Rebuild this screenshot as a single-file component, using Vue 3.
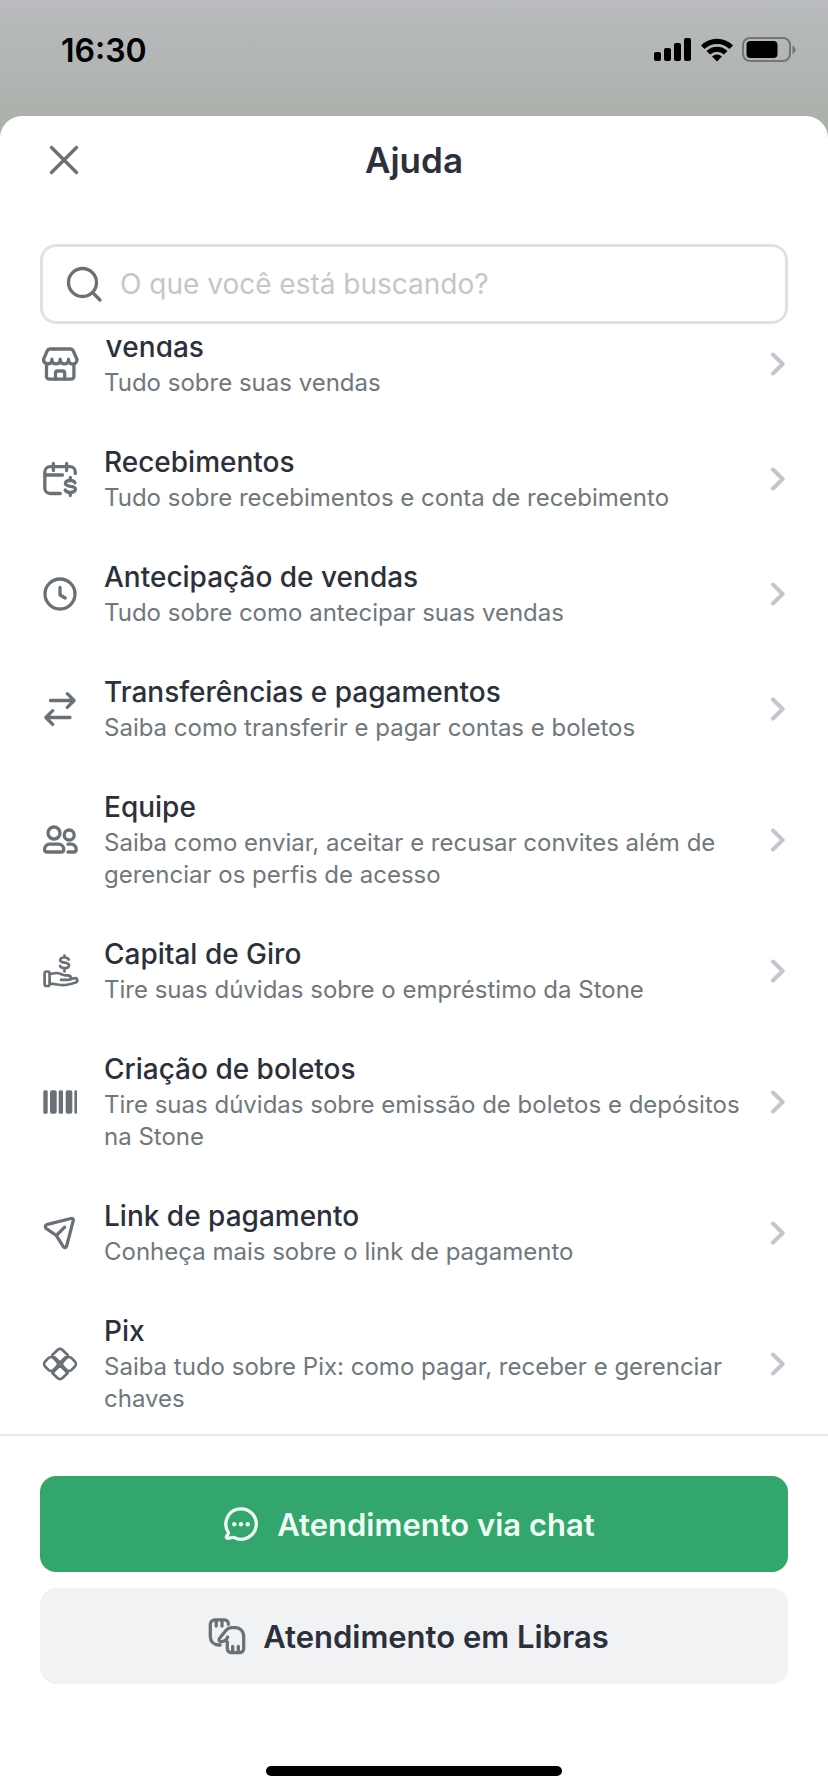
<script setup>
import { onMounted, ref } from 'vue'

const search = ref('')
const scroller = ref(null)

const topics = [
  { icon: 'store', title: 'Vendas', text: 'Tudo sobre suas vendas' },
  { icon: 'calendar', title: 'Recebimentos', text: 'Tudo sobre recebimentos e conta de recebimento' },
  { icon: 'clock', title: 'Antecipação de vendas', text: 'Tudo sobre como antecipar suas vendas' },
  { icon: 'transfer', title: 'Transferências e pagamentos', text: 'Saiba como transferir e pagar contas e boletos' },
  { icon: 'team', title: 'Equipe', text: 'Saiba como enviar, aceitar e recusar convites além de gerenciar os perfis de acesso' },
  { icon: 'loan', title: 'Capital de Giro', text: 'Tire suas dúvidas sobre o empréstimo da Stone' },
  { icon: 'barcode', title: 'Criação de boletos', text: 'Tire suas dúvidas sobre emissão de boletos e depósitos na Stone' },
  { icon: 'send', title: 'Link de pagamento', text: 'Conheça mais sobre o link de pagamento' },
  { icon: 'pix', title: 'Pix', text: 'Saiba tudo sobre Pix: como pagar, receber e gerenciar chaves' },
]

// The list opens slightly scrolled, with the first row under the search field.
onMounted(() => {
  scroller.value.scrollTop = 33
})
</script>

<template>
  <div class="screen">
    <div class="status">
      <span class="time">16:30</span>
      <svg class="indicators" viewBox="0 0 142 28" aria-hidden="true">
        <rect x="0" y="16" width="7" height="9" rx="2" />
        <rect x="10" y="12" width="7" height="13" rx="2" />
        <rect x="20" y="7" width="7" height="18" rx="2" />
        <rect x="30" y="2" width="7" height="23" rx="2" />
        <path d="M47 9.500a22.500 22.500 0 0 1 32 0l-3.500 3.600a17.700 17.700 0 0 0-25 0z" />
        <path d="M52.500 15a14.800 14.800 0 0 1 21 0l-3.600 3.600a9.800 9.800 0 0 0-13.800 0z" />
        <path d="M58 20.400a7.200 7.200 0 0 1 10 0L63 25.500z" />
        <rect class="shell" x="89" y="2" width="47" height="23" rx="7" />
        <rect x="92.500" y="5" width="31" height="17" rx="4" />
        <path class="nub" d="M138.500 9.500v8.500c1.800-.8 3-2.400 3-4.250s-1.200-3.450-3-4.250z" />
      </svg>
    </div>

    <main class="sheet">
      <header class="head">
        <button class="close" type="button" aria-label="Fechar">
          <svg class="icon" viewBox="0 0 40 40"><path d="M7.500 7.500l25 25M32.500 7.500l-25 25" /></svg>
        </button>
        <h1>Ajuda</h1>
      </header>

      <label class="search">
        <svg class="icon" viewBox="0 0 40 40" aria-hidden="true">
          <circle cx="18.500" cy="18.500" r="14" /><path d="M29 29l7 7" />
        </svg>
        <input v-model="search" type="text" aria-label="Buscar" placeholder="O que você está buscando?" />
      </label>

      <div ref="scroller" class="scroller">
        <ul class="topics">
          <li v-for="topic in topics" :key="topic.title">
            <button class="topic" type="button">
              <svg class="icon" viewBox="0 0 40 40" aria-hidden="true">
                <template v-if="topic.icon === 'store'">
                  <path d="M10 5h20.500a3 3 0 0 1 2.700 1.700L37 15.500a4.300 4.300 0 0 1-8.500 1.200v-1.500 1.500a4.300 4.300 0 0 1-8.300 0v-1.500 1.500a4.300 4.300 0 0 1-8.300 0v-1.500 1.500a4.300 4.300 0 0 1-8.400-1.200L7.300 6.700A3 3 0 0 1 10 5z" />
                  <path d="M6.500 20v12.500a2.700 2.700 0 0 0 2.700 2.700h22a2.700 2.700 0 0 0 2.700-2.700V20" />
                  <path d="M15.500 35v-6a2 2 0 0 1 2-2h5.200a2 2 0 0 1 2 2v6" />
                </template>
                <template v-else-if="topic.icon === 'calendar'">
                  <path d="M35.300 14.500v-1.500a5.300 5.300 0 0 0-5.300-5.300H10A5.300 5.300 0 0 0 4.800 13v16a5.500 5.500 0 0 0 5.500 5.500h10M5 16h17.500M13.400 4.500v7M26.600 4.500v7" />
                  <path d="M35 23.700c-.7-1.300-2.400-2.200-4.700-2.200-2.900 0-4.900 1.200-4.900 3.100 0 4 10 1.300 10 5.500 0 2-2.100 3.300-5.100 3.300-2.500 0-4.400-.9-5.100-2.400M30.300 18.500v2.500M30.300 34v2.500" />
                </template>
                <template v-else-if="topic.icon === 'clock'">
                  <circle cx="20" cy="20" r="15" /><path d="M20 13.500V21l5.200 3" />
                </template>
                <template v-else-if="topic.icon === 'transfer'">
                  <path d="M10.500 11.500H34M27.300 4.700l6.800 6.800-6.800 6.800M30 28.500H6M12.700 21.700l-6.800 6.800 6.800 6.800" />
                </template>
                <template v-else-if="topic.icon === 'team'">
                  <circle cx="14" cy="13" r="6" /><circle cx="29.200" cy="15" r="5" />
                  <path d="M9.500 24.200h9a5.200 5.200 0 0 1 5.200 5.200c0 1.800-.9 2.600-2.700 2.600H7.300c-1.900 0-2.700-.8-2.700-2.600a5 5 0 0 1 4.900-5.200zM28 24.200h3a5 5 0 0 1 5.200 5.200c0 1.800-.8 2.600-2.700 2.600H28" />
                </template>
                <g v-else-if="topic.icon === 'loan'" class="fine">
                  <rect x="4.600" y="20.500" width="5" height="14.500" rx="2" />
                  <path d="M10 23l6-1c3.500-.2 6.500 2.300 9 2.300h2.500c2.500 0 3.500 1.200 3.500 3M21 28.800h8l5-1.600c3.500-.9 4.500 3 1.500 4.300-4 1.300-8.500 2.700-12.500 2.700-4 0-8-1.500-13-1.500" />
                  <path d="M28.700 8.500c-.7-1.200-2.200-2-4.200-2-2.600 0-4.300 1-4.300 2.700 0 3.500 8.800 1.200 8.800 5 0 1.700-1.900 2.900-4.500 2.900-2.200 0-3.800-.8-4.400-2.100M24.500 4.500v2M24.500 17.500v3" />
                </g>
                <g v-else-if="topic.icon === 'barcode'" class="solid">
                  <rect x="3.300" y="8.300" width="4.400" height="23.400" rx="1.500" />
                  <rect x="10" y="8.300" width="6.700" height="23.400" rx="2" />
                  <rect x="18.700" y="8.300" width="4.300" height="23.400" rx="1.500" />
                  <rect x="25.700" y="8.300" width="6.600" height="23.400" rx="2" />
                  <rect x="34.400" y="8.300" width="2.600" height="23.400" rx="1.200" />
                </g>
                <template v-else-if="topic.icon === 'send'">
                  <path d="M6.500 11.700l24.500-6.200c1.600-.4 2.700.8 2.200 2.400l-6.600 25.300c-.5 1.800-2.300 2-3.300.5l-7-11.200-9.900-6.900c-1.500-1.200-1.400-3.400.1-3.900zM16.300 22.500l8.400-8.300" />
                </template>
                <g v-else class="fine">
                  <rect x="5" y="14" width="12" height="12" rx="4" transform="rotate(45 11 20)" />
                  <rect x="23" y="14" width="12" height="12" rx="4" transform="rotate(45 29 20)" />
                  <path d="M12.300 11l5.200-5q2.500-2.200 5 0l5.200 5L20 18.700zM12.300 29l5.200 5q2.500 2.200 5 0l5.200-5L20 21.300z" />
                </g>
              </svg>
              <span class="copy">
                <span class="title">{{ topic.title }}</span>
                <span class="text">{{ topic.text }}</span>
              </span>
              <svg class="chevron" viewBox="0 0 24 24" aria-hidden="true"><path d="M9 2.500L18.700 12 9 21.500" /></svg>
            </button>
          </li>
        </ul>
      </div>

      <footer class="actions">
        <button class="action primary" type="button">
          <svg class="icon" viewBox="0 0 40 40" aria-hidden="true">
            <path d="M7.300 28.300A15.200 15.200 0 1 1 13 33.500c-2-.8-3.800 1-6.300.8-1.500-.2-1.600-1.300-.9-2.300.9-1.200 2-2.300 1.500-3.700z" />
            <circle class="dot" cx="13.300" cy="20.300" r="2.200" /><circle class="dot" cx="20" cy="20.300" r="2.200" /><circle class="dot" cx="26.700" cy="20.300" r="2.200" />
          </svg>
          <span>Atendimento via chat</span>
        </button>
        <button class="action secondary" type="button">
          <svg class="icon" viewBox="0 0 40 40" aria-hidden="true">
            <path d="M21.300 8.300V7.500a3.700 3.700 0 0 0-3.700-3.700H8A4.800 4.800 0 0 0 3.300 8.600v12c0 5 3.500 8.400 8.700 8.400h1.200M9.200 4v6M15 4v6" />
            <path d="M20.300 26v6.500a4.200 4.200 0 0 0 4.200 4.200h8a4.200 4.200 0 0 0 4.200-4.200V19.700a8 8 0 0 0-8-8h-4.200c-2.200 0-3.700.6-5.200 2.300L12.800 22c-1.700 2-.8 3.800 1.700 3.700 2.400-.2 5-1.500 6.200-4.700M25.700 36v-5.500M31.300 36v-5.500" />
          </svg>
          <span>Atendimento em Libras</span>
        </button>
        <div class="home"></div>
      </footer>
    </main>
  </div>
</template>

<style>
body {
  background: #fff;
}
</style>

<style scoped>
.screen {
  display: flex;
  flex-direction: column;
  height: 100vh;
  font-family: Inter, "Liberation Sans", sans-serif;
  color: #2b303b;
  background: linear-gradient(#b9bbbe, #acb1ac 116px, #acb1ac);
}

button {
  font: inherit;
  color: inherit;
  border: 0;
  padding: 0;
  background: none;
  cursor: pointer;
}

.status {
  flex: none;
  display: flex;
  justify-content: space-between;
  align-items: center;
  height: 116px;
  box-sizing: border-box;
  padding: 0 32px 16px 61px;
  color: #000;
}

.time {
  font-size: 32px;
  font-weight: 600;
}

.indicators {
  width: 142px;
  height: 28px;
}

.shell {
  fill: none;
  stroke: #727573;
  stroke-width: 2;
}

.nub {
  fill: #727573;
}

.sheet {
  flex: 1;
  min-height: 0;
  display: flex;
  flex-direction: column;
  background: #fff;
  border-radius: 22px 22px 0 0;
}

.head {
  flex: none;
  display: grid;
  grid-template-columns: 40px 1fr 40px;
  align-items: center;
  height: 88px;
  padding: 0 44px;
  margin-bottom: 40px;
}

.close {
  height: 40px;
}

h1 {
  margin: 0;
  font-size: 35px;
  font-weight: 600;
  text-align: center;
}

.icon {
  flex: none;
  display: block;
  width: 40px;
  height: 40px;
  fill: none;
  stroke: #697177;
  stroke-width: 3.300;
  stroke-linecap: round;
  stroke-linejoin: round;
}

.fine {
  stroke-width: 2.700;
}

.solid {
  fill: #697177;
  stroke: none;
}

.search {
  flex: none;
  display: flex;
  align-items: center;
  gap: 16px;
  height: 80px;
  box-sizing: border-box;
  margin: 0 40px 16px;
  padding: 0 21px;
  border: 3px solid #dfe2e4;
  border-radius: 16px;
}

.search input {
  flex: 1;
  min-width: 0;
  padding: 0;
  border: 0;
  outline: 0;
  font: 28px Inter, "Liberation Sans", sans-serif;
  color: #2b303b;
  background: none;
}

.search input::placeholder {
  color: #c1c7cc;
  opacity: 1;
}

.scroller {
  flex: 1;
  min-height: 0;
  overflow-y: auto;
  scrollbar-width: none;
}

.topics {
  margin: 0;
  padding: 0 40px 16px;
  list-style: none;
}

.topic {
  display: flex;
  align-items: center;
  gap: 24px;
  width: 100%;
  padding: 22px 0 23px;
  text-align: left;
}

.copy {
  flex: 1;
  display: flex;
  flex-direction: column;
  gap: 2px;
}

.title {
  font-size: 28px;
  font-weight: 500;
  line-height: 36px;
}

.text {
  font-size: 24px;
  line-height: 32px;
  color: #70777d;
}

.chevron {
  flex: none;
  width: 24px;
  height: 24px;
  fill: none;
  stroke: #c1c7cc;
  stroke-width: 4;
  stroke-linecap: round;
  stroke-linejoin: round;
}

.actions {
  flex: none;
  display: flex;
  flex-direction: column;
  gap: 16px;
  padding: 40px 40px 16px;
  border-top: 2px solid #e9eaec;
}

.action {
  display: flex;
  align-items: center;
  justify-content: center;
  gap: 16px;
  height: 96px;
  padding-right: 12px;
  border-radius: 16px;
  font-size: 31px;
  font-weight: 600;
}

.primary {
  color: #effdf5;
  background: #32a66c;
}

.primary .icon {
  stroke: #effdf5;
}

.dot {
  fill: #effdf5;
  stroke: none;
}

.secondary {
  background: #f1f2f4;
}

.home {
  align-self: center;
  width: 296px;
  height: 10px;
  margin-top: 66px;
  border-radius: 5px;
  background: #000;
}
</style>
